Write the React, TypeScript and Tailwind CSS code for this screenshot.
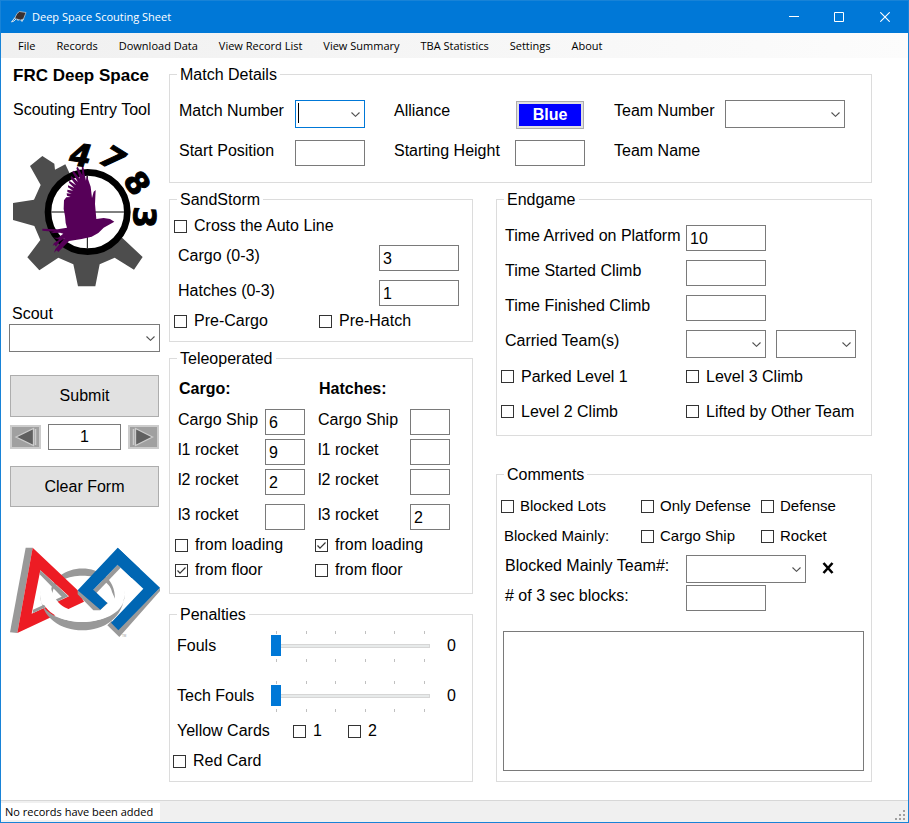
import { useId, useState, type ReactNode } from "react";

const FIELD =
  "h-[26px] rounded-none border border-[#7a7a7a] bg-white pl-[3px] pt-[2px] text-[16px] leading-[20px] text-black outline-none";

function Group({ title, className = "", children }: { title: string; className?: string; children: ReactNode }) {
  return (
    <fieldset className={`min-w-0 border border-[#dcdcdc] ${className}`}>
      <legend className="ml-[7px] px-[3px] pt-[2px] leading-[20px]">{title}</legend>
      {children}
    </fieldset>
  );
}

function Check({
  label,
  checked = false,
  className = "",
}: {
  label: string;
  checked?: boolean;
  className?: string;
}) {
  return (
    <label className={`flex items-center gap-[6px] leading-[20px] whitespace-nowrap ${className}`}>
      <span className="grid size-[13px] shrink-0">
        <input
          type="checkbox"
          defaultChecked={checked}
          className="peer size-[13px] appearance-none border border-[#333333] bg-white [grid-area:1/1]"
        />
        <svg
          viewBox="0 0 13 13"
          className="pointer-events-none invisible size-[13px] [grid-area:1/1] peer-checked:visible"
        >
          <path d="M2.5 6.5 L5 9.2 L10.5 3.5" fill="none" stroke="#333" strokeWidth="1.2" />
        </svg>
      </span>
      <span>{label}</span>
    </label>
  );
}

function Combo({
  id,
  label,
  className = "",
  active = false,
}: {
  id?: string;
  label?: string;
  className?: string;
  active?: boolean;
}) {
  return (
    <span className={`relative block h-[28px] ${className}`}>
      <select
        id={id}
        aria-label={label}
        className={`block h-full w-full appearance-none rounded-none border bg-white pl-[3px] outline-none ${
          active ? "border-[#0078d7]" : "border-[#7a7a7a]"
        }`}
      >
        <option></option>
      </select>
      {active && <span className="absolute top-[3px] left-[3px] h-[20px] w-px bg-black" />}
      <svg viewBox="0 0 9 5" className="pointer-events-none absolute top-[12px] right-[5px] h-[5px] w-[9px]">
        <path d="M0.5 0.5 L4.5 4.3 L8.5 0.5" fill="none" stroke="#505050" strokeWidth="1.1" />
      </svg>
    </span>
  );
}

function NumberRow({
  label,
  value = "",
  size,
  className = "",
}: {
  label: string;
  value?: string;
  size: string;
  className?: string;
}) {
  const id = useId();
  return (
    <div className={`flex items-start justify-between ${className}`}>
      <label htmlFor={id} className="pt-px leading-[20px] whitespace-nowrap">
        {label}
      </label>
      <input id={id} type="text" defaultValue={value} className={`${FIELD} ${size}`} />
    </div>
  );
}

function RocketColumn({
  title,
  className,
  values,
  loading,
  floor,
}: {
  title: string;
  className: string;
  values: string[];
  loading: boolean;
  floor: boolean;
}) {
  return (
    <div className={className}>
      <h3 className="pl-[4px] leading-[20px] font-bold">{title}</h3>
      <div className="mt-[10px] flex flex-col gap-[4px] pl-[3px]">
        <NumberRow label="Cargo Ship" value={values[0]} size="w-[40px]" />
        <NumberRow label="l1 rocket" value={values[1]} size="w-[40px]" />
        <NumberRow label="l2 rocket" value={values[2]} size="w-[40px]" />
        <NumberRow label="l3 rocket" value={values[3]} size="w-[40px]" className="mt-[5px]" />
      </div>
      <div className="mt-[5px] flex flex-col gap-[5px]">
        <Check label="from loading" checked={loading} className="gap-[7px]" />
        <Check label="from floor" checked={floor} className="gap-[7px]" />
      </div>
    </div>
  );
}

function Ticks() {
  return (
    <div className="flex h-[3px] justify-between px-[5px]">
      {[0, 1, 2, 3, 4, 5].map((t) => (
        <span key={t} className="w-px bg-[#c0c0c0]" />
      ))}
    </div>
  );
}

function FoulSlider({ label }: { label: string }) {
  const id = useId();
  const [value, setValue] = useState(0);
  return (
    <div className="flex h-[32px] items-center">
      <label htmlFor={id} className="w-[94px] leading-[20px]">
        {label}
      </label>
      <div className="flex w-[159px] flex-col gap-[2px]">
        <Ticks />
        <input
          id={id}
          type="range"
          min={0}
          max={5}
          value={value}
          onChange={(e) => setValue(Number(e.target.value))}
          className="block h-[21px] w-full appearance-none bg-transparent [&::-webkit-slider-runnable-track]:h-[4px] [&::-webkit-slider-runnable-track]:border [&::-webkit-slider-runnable-track]:border-[#d6d6d6] [&::-webkit-slider-runnable-track]:bg-[#e7eaea] [&::-webkit-slider-thumb]:-mt-[10px] [&::-webkit-slider-thumb]:-ml-px [&::-webkit-slider-thumb]:h-[21px] [&::-webkit-slider-thumb]:w-[10px] [&::-webkit-slider-thumb]:appearance-none [&::-webkit-slider-thumb]:bg-[#0078d7]"
        />
        <Ticks />
      </div>
      <output htmlFor={id} className="ml-[17px] leading-[20px]">
        {value}
      </output>
    </div>
  );
}

function TeamLogo() {
  return (
    <svg viewBox="30 30 450 450" className="size-[150px] overflow-visible" role="img" aria-label="Team 4783">
      <path
        d="M90 108 L127 78 L163 101 L165 119 L196 103 L263 246 L368 325 L428 381 L402 419 L344 383 L299 403 L286 469 L234 469 L220 403 L175 383 L118 421 L82 382 L121 330 L103 288 L39 270 L39 219 L102 209 L122 165 Z"
        fill="#4d4d4d"
      />
      <circle cx="263" cy="246" r="119" fill="#fff" stroke="#000" strokeWidth="20" />
      <path d="M154 246 H372 M262 137 V355" stroke="#000" strokeWidth="3" />
      <path
        d="M343 275 L330 267 L311 264 L289 267 L285 222 L287 180 L281 185 L276 204 L272 170 L265 150 L260 136 L258 152 L253 130 L249 100 L245 106 L247 136 L233 110 L229 114 L240 146 L220 122 L217 127 L234 156 L214 138 L212 144 L228 166 L208 152 L207 158 L223 174 L204 166 L204 172 L219 182 L202 179 L202 186 L215 191 L200 190 L201 197 L212 201 L199 202 L192 211 L191 237 L195 258 L197 279 L201 293 L173 298 L127 296 L127 302 L162 305 L148 310 L180 308 L190 311 L174 323 L160 323 L178 329 L162 339 L158 348 L163 344 L168 350 L178 335 L194 325 L166 357 L162 368 L170 361 L175 366 L207 333 L245 327 L275 320 L295 309 L311 293 Z"
        fill="#560058"
      />
      <g
        fill="#000"
        stroke="#000"
        strokeWidth="3"
        fontFamily="DejaVu Sans, sans-serif"
        fontWeight="bold"
        fontSize="92"
        textAnchor="middle"
      >
        <text transform="translate(242 75) rotate(8)" y="33" fontStyle="italic">
          4
        </text>
        <text transform="translate(338 84) rotate(32)" y="33" fontStyle="italic">
          7
        </text>
        <text transform="translate(412 159) rotate(58)" y="33">
          8
        </text>
        <text transform="translate(434 262) rotate(92)" y="33">
          3
        </text>
      </g>
    </svg>
  );
}

function FirstLogo() {
  return (
    <svg viewBox="30 50 450 270" className="h-[90px] w-[150px]" role="img" aria-label="FIRST">
      <path
        d="M150 205 C146 84 348 84 345 205 L336 185 C325 120 170 120 158 185 Z"
        fill="#999"
      />
      <path d="M77 52 H98 L52 308 L30 306 Z" fill="#999" />
      <path
        d="M98 52 L233 180 L252 214 L52 308 Z M121 120 L95 250 L207 198 Z"
        fill="#ed1c24"
        fillRule="evenodd"
      />
      <path d="M121 120 L205 198 L98 249 L99 238 L185 199 L119 132 Z" fill="#999" />
      <path d="M233 180 V192 L280 240 L300 240 L324 218 L300 210 Z" fill="#999" />
      <path d="M280 178 L353 103 L362 112 L287 190 Z" fill="#999" />
      <path d="M353 52 L420 116 L395 143 L353 103 L280 178 L322 218 L301 238 L233 180 Z" fill="#0066b3" />
      <path d="M121 180 C112 340 382 340 373 180 L373 204 C360 298 134 298 121 204 Z" fill="#999" />
      <path
        d="M121 180 C118 307 376 307 373 180 C350 260 290 248 247 244 C205 242 165 225 153 172 Z"
        fill="#fff"
      />
      <path d="M480 172 V182 L358 320 L322 285 L335 272 L355 296 Z" fill="#999" />
      <path d="M353 52 L480 172 L355 300 L333 277 L430 175 L353 103 Z" fill="#0066b3" />
      <text x="366" y="319" fontSize="9" fill="#999" fontFamily="Liberation Sans, sans-serif">
        TM
      </text>
    </svg>
  );
}

const BUTTON = "border border-[#adadad] bg-[#e1e1e1] text-center leading-[20px]";

function Sidebar() {
  const scout = useId();
  return (
    <aside className="flex w-[151px] shrink-0 flex-col">
      <h1 className="pt-[3px] pl-[4px] text-[17px] leading-[20px] font-bold whitespace-nowrap">FRC Deep Space</h1>
      <p className="mt-[14px] pl-[4px] leading-[20px] whitespace-nowrap">Scouting Entry Tool</p>
      <div className="mt-[20px] pl-px">
        <TeamLogo />
      </div>
      <label htmlFor={scout} className="mt-[14px] pl-[3px] leading-[20px]">
        Scout
      </label>
      <Combo id={scout} className="w-full" />
      <div className="mt-[23px] flex flex-col px-px">
        <button type="submit" className={`h-[42px] ${BUTTON}`}>
          Submit
        </button>
        <div className="mt-[7px] flex items-center justify-between">
          <button
            type="button"
            aria-label="Previous record"
            className="flex h-[24px] w-[31px] items-center justify-center border-2 border-[#cccccc] bg-[#a0a0a0]"
          >
            <svg viewBox="0 0 27 20" className="h-[20px] w-[27px]">
              <path d="M23.500 2 V18" stroke="#cccccc" strokeWidth="1.500" />
              <path d="M4 10 L21.500 1.500 V18.500 Z" fill="#606060" stroke="#cccccc" strokeWidth="1.300" />
            </svg>
          </button>
          <input
            type="text"
            aria-label="Record number"
            defaultValue="1"
            className="h-[26px] w-[73px] border border-[#7a7a7a] bg-white text-center leading-[20px] outline-none"
          />
          <button
            type="button"
            aria-label="Next record"
            className="flex h-[24px] w-[31px] items-center justify-center border-2 border-[#cccccc] bg-[#a0a0a0]"
          >
            <svg viewBox="0 0 27 20" className="h-[20px] w-[27px]">
              <path d="M3.500 2 V18" stroke="#cccccc" strokeWidth="1.500" />
              <path d="M22.500 10 L5.500 1.500 V18.500 Z" fill="#606060" stroke="#cccccc" strokeWidth="1.300" />
            </svg>
          </button>
        </div>
        <button type="reset" className={`mt-[16px] h-[41px] ${BUTTON}`}>
          Clear Form
        </button>
        <div className="mt-[40px]">
          <FirstLogo />
        </div>
      </div>
    </aside>
  );
}

function MatchDetails() {
  const id = useId();
  const label = "pt-px leading-[20px] whitespace-nowrap";
  return (
    <Group title="Match Details">
      <div className="grid auto-rows-[40px] grid-cols-[116px_99px_121px_99px_111px_1fr] items-start pt-[15px] pb-[2px] pl-[9px]">
        <label htmlFor={`${id}-match`} className={label}>
          Match Number
        </label>
        <Combo id={`${id}-match`} active className="w-[70px]" />
        <label htmlFor={`${id}-alliance`} className={label}>
          Alliance
        </label>
        <button
          id={`${id}-alliance`}
          type="button"
          className="m-px h-[28px] w-[68px] border border-[#adadad] bg-[#e1e1e1] p-[2px] leading-[22px] font-bold text-white"
        >
          <span className="block bg-[#0000ff]">Blue</span>
        </button>
        <label htmlFor={`${id}-team`} className={label}>
          Team Number
        </label>
        <Combo id={`${id}-team`} className="w-[120px]" />
        <label htmlFor={`${id}-start`} className={label}>
          Start Position
        </label>
        <input id={`${id}-start`} type="text" className={`${FIELD} w-[70px]`} />
        <label htmlFor={`${id}-height`} className={label}>
          Starting Height
        </label>
        <input id={`${id}-height`} type="text" className={`${FIELD} w-[70px]`} />
        <span className={label}>Team Name</span>
      </div>
    </Group>
  );
}

function SandStorm() {
  return (
    <Group title="SandStorm">
      <div className="flex flex-col pt-[6px] pr-[13px] pb-[10px] pl-[4px]">
        <Check label="Cross the Auto Line" className="gap-[7px]" />
        <div className="mt-[9px] flex flex-col gap-[9px] pl-[4px]">
          <NumberRow label="Cargo (0-3)" value="3" size="w-[80px]" />
          <NumberRow label="Hatches (0-3)" value="1" size="w-[80px]" />
        </div>
        <div className="mt-[5px] grid grid-cols-[145px_1fr]">
          <Check label="Pre-Cargo" className="gap-[7px]" />
          <Check label="Pre-Hatch" className="gap-[7px]" />
        </div>
      </div>
    </Group>
  );
}

function Teleoperated() {
  return (
    <Group title="Teleoperated">
      <div className="flex gap-[10px] pt-[10px] pb-[13px] pl-[5px]">
        <RocketColumn title="Cargo:" className="w-[130px]" values={["6", "9", "2", ""]} loading={false} floor />
        <RocketColumn title="Hatches:" className="w-[135px]" values={["", "", "", "2"]} loading floor={false} />
      </div>
    </Group>
  );
}

function Penalties() {
  return (
    <Group title="Penalties">
      <div className="flex flex-col pt-[5px] pb-[10px] pl-[3px]">
        <div className="flex flex-col gap-[18px] pl-[4px]">
          <FoulSlider label="Fouls" />
          <FoulSlider label="Tech Fouls" />
        </div>
        <div className="mt-[9px] flex pl-[4px]">
          <span className="w-[116px] leading-[20px]">Yellow Cards</span>
          <Check label="1" className="w-[55px] gap-[7px]" />
          <Check label="2" className="gap-[7px]" />
        </div>
        <Check label="Red Card" className="mt-[10px] gap-[7px]" />
      </div>
    </Group>
  );
}

function Endgame() {
  const id = useId();
  const label = "pl-[4px] pt-px leading-[20px] whitespace-nowrap";
  return (
    <Group title="Endgame">
      <div className="grid auto-rows-[35px] grid-cols-[185px_90px_80px] items-start pt-[15px] pl-[4px]">
        <label htmlFor={`${id}-arrived`} className={label}>
          Time Arrived on Platform
        </label>
        <input id={`${id}-arrived`} type="text" defaultValue="10" className={`${FIELD} col-span-2 w-[80px]`} />
        <label htmlFor={`${id}-started`} className={label}>
          Time Started Climb
        </label>
        <input id={`${id}-started`} type="text" className={`${FIELD} col-span-2 w-[80px]`} />
        <label htmlFor={`${id}-finished`} className={label}>
          Time Finished Climb
        </label>
        <input id={`${id}-finished`} type="text" className={`${FIELD} col-span-2 w-[80px]`} />
        <label htmlFor={`${id}-carried`} className={label}>
          Carried Team(s)
        </label>
        <Combo id={`${id}-carried`} className="w-[80px]" />
        <Combo label="Second carried team" className="w-[80px]" />
        <Check label="Parked Level 1" className="h-[23px] gap-[7px]" />
        <Check label="Level 3 Climb" className="col-span-2 h-[23px] gap-[7px]" />
        <Check label="Level 2 Climb" className="h-[23px] gap-[7px]" />
        <Check label="Lifted by Other Team" className="col-span-2 h-[23px] gap-[7px]" />
      </div>
    </Group>
  );
}

function Comments() {
  const id = useId();
  return (
    <Group title="Comments">
      <div className="flex flex-col pt-[6px] pr-[7px] pb-[10px] pl-[4px]">
        <div className="grid auto-rows-[30px] grid-cols-[140px_120px_1fr] items-center text-[15px]">
          <Check label="Blocked Lots" />
          <Check label="Only Defense" />
          <Check label="Defense" />
          <span className="pl-[3px] leading-[20px]">Blocked Mainly:</span>
          <Check label="Cargo Ship" />
          <Check label="Rocket" />
        </div>
        <div className="mt-[4px] grid auto-rows-[30px] grid-cols-[185px_120px_1fr] items-start">
          <label htmlFor={`${id}-team`} className="pt-px pl-[4px] leading-[20px]">
            Blocked Mainly Team#:
          </label>
          <Combo id={`${id}-team`} className="w-[120px]" />
          <button type="button" aria-label="Clear team" className="ml-[16px] flex h-[26px] w-[12px] items-center">
            <svg viewBox="0 0 12 12" className="size-[12px]">
              <path d="M1.500 1 L10.500 11 M10.500 1 L1.500 11" stroke="#000" strokeWidth="2.600" />
            </svg>
          </button>
          <label htmlFor={`${id}-blocks`} className="pt-px pl-[4px] leading-[20px]">
            # of 3 sec blocks:
          </label>
          <input id={`${id}-blocks`} type="text" className={`${FIELD} w-[80px]`} />
        </div>
        <textarea
          aria-label="Comments"
          className="mt-[16px] ml-[2px] block h-[140px] resize-none rounded-none border border-[#7a7a7a] bg-white p-[3px] outline-none"
        />
      </div>
    </Group>
  );
}

const MENU = [
  "File",
  "Records",
  "Download Data",
  "View Record List",
  "View Summary",
  "TBA Statistics",
  "Settings",
  "About",
];

export default function App() {
  return (
    <div className="flex min-h-screen flex-col border border-[#1883d7] bg-white font-['Liberation_Sans',Arial,sans-serif] text-[16px] text-black">
      <header className="flex h-[32px] items-center bg-[#0078d7] pl-[10px] font-['Open_Sans',sans-serif] text-[11px] text-white">
        <svg viewBox="0 0 16 14" className="mr-[5px] h-[14px] w-[16px]">
          <path
            d="M6 3.500 L8.500 1.500 L15 2.500 L12.500 9 L9.500 10 L3.500 8.500 Z"
            fill="#3a3030"
            stroke="#c8d4dc"
            strokeWidth="0.700"
          />
          <path
            d="M4 7.500 L0.500 12 L3 11 L5 9 M6 9.500 L7.500 10.500 M10 10 L11 11.500 L12.500 9"
            fill="none"
            stroke="#d8e0e6"
            strokeWidth="1"
          />
        </svg>
        <span className="flex-1">Deep Space Scouting Sheet</span>
        <button type="button" aria-label="Minimize" className="flex h-full w-[45px] items-center justify-center">
          <svg viewBox="0 0 10 10" className="size-[10px]">
            <path d="M0 4.500 H10" stroke="#fff" />
          </svg>
        </button>
        <button type="button" aria-label="Maximize" className="flex h-full w-[45px] items-center justify-center">
          <svg viewBox="0 0 10 10" className="size-[10px]">
            <path d="M0.500 0.500 H9.500 V9.500 H0.500 Z" fill="none" stroke="#fff" />
          </svg>
        </button>
        <button type="button" aria-label="Close" className="flex h-full w-[47px] items-center justify-center">
          <svg viewBox="0 0 10 10" className="size-[10px]">
            <path d="M0.300 0.300 L9.700 9.700 M9.700 0.300 L0.300 9.700" stroke="#fff" strokeWidth="1.100" />
          </svg>
        </button>
      </header>
      <nav className="flex h-[25px] items-center gap-[21px] bg-gradient-to-r from-[#f0f0f0] to-[#fcfcfc] pt-[2px] pl-[17px] font-['Open_Sans',sans-serif] text-[11px]">
        {MENU.map((item) => (
          <button key={item} type="button" className="whitespace-nowrap">
            {item}
          </button>
        ))}
      </nav>
      <form className="flex flex-1 gap-[9px] pt-[5px] pr-[36px] pb-[18px] pl-[8px]" onSubmit={(e) => e.preventDefault()}>
        <Sidebar />
        <main className="flex min-w-0 flex-1 flex-col gap-[5px]">
          <MatchDetails />
          <div className="grid flex-1 grid-cols-[304fr_376fr] gap-[23px]">
            <div className="flex min-w-0 flex-col gap-[5px]">
              <SandStorm />
              <Teleoperated />
              <div className="mt-auto">
                <Penalties />
              </div>
            </div>
            <div className="flex min-w-0 flex-col justify-between">
              <Endgame />
              <Comments />
            </div>
          </div>
        </main>
      </form>
      <footer className="flex h-[22px] items-center justify-between border-t border-[#d7d7d7] bg-[#f0f0f0] font-['Open_Sans',sans-serif] text-[11px]">
        <span className="bg-white pr-[7px] pl-[4px] leading-[17px]">No records have been added</span>
        <svg viewBox="0 0 12 12" className="mt-[6px] mr-[2px] size-[12px]">
          <path
            d="M9 1 h2 v2 h-2 Z M5 5 h2 v2 h-2 Z M9 5 h2 v2 h-2 Z M1 9 h2 v2 h-2 Z M5 9 h2 v2 h-2 Z M9 9 h2 v2 h-2 Z"
            fill="#a0a0a0"
          />
        </svg>
      </footer>
    </div>
  );
}
